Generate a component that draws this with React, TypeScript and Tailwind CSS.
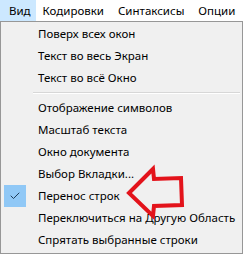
import { Check } from "lucide-react";

const topMenus = ["Вид", "Кодировки", "Синтаксисы", "Опции"];

type Item = { label: string; checked?: boolean } | { separator: true };

const items: Item[] = [
  { label: "Поверх всех окон" },
  { label: "Текст во весь Экран" },
  { label: "Текст во всё Окно" },
  { separator: true },
  { label: "Отображение символов" },
  { label: "Масштаб текста" },
  { label: "Окно документа" },
  { label: "Выбор Вкладки..." },
  { label: "Перенос строк", checked: true },
  { label: "Переключиться на Другую Область" },
  { label: "Спрятать выбранные строки" },
];

const App = () => {
  return (
    <div
      className="relative w-[245px] h-[256px] overflow-hidden bg-white text-[11.5px] text-black"
      style={{ fontFamily: '"Noto Sans", "Open Sans", sans-serif' }}
    >
      {/* menu bar */}
      <div className="flex h-[21px] items-center bg-white">
        {topMenus.map((m, i) => (
          <div
            key={m}
            className={
              i === 0
                ? "flex h-full items-center bg-[#cce8ff] pl-[9px] pr-[5px]"
                : "flex h-full items-center px-[7px]"
            }
          >
            {m}
          </div>
        ))}
      </div>

      {/* dropdown */}
      <div className="w-[243px] h-[233px] border border-[#979797] bg-[#f0f0f0] pt-[1px] pb-[2px] pl-[2px] pr-[2px]">
        {items.map((it, i) =>
          "separator" in it ? (
            <div key={i} className="ml-[30px] my-[3px] h-[2px] border-t border-[#d7d7d7] border-b-white border-b" />
          ) : (
            <div key={i} className="flex h-[22px] items-center">
              <div className="flex h-full w-[35px] shrink-0 items-center">
                {it.checked && (
                  <div className="ml-[1px] flex h-[22px] w-[22px] items-center justify-center bg-[#90c8f6]">
                    <Check size={12} strokeWidth={2} className="text-[#1e3c5a]" />
                  </div>
                )}
              </div>
              <span className="whitespace-nowrap">{it.label}</span>
            </div>
          )
        )}
      </div>

      {/* red arrow annotation */}
      <svg
        className="absolute left-0 top-0 pointer-events-none"
        width="245"
        height="256"
        viewBox="0 0 245 256"
      >
        <polygon
          points="129,193 153,169 154,179 181,178 182,205 154,206 153,216"
          fill="none"
          stroke="#e3131b"
          strokeWidth="4"
          strokeLinejoin="miter"
        />
      </svg>
    </div>
  );
};

export default App;
